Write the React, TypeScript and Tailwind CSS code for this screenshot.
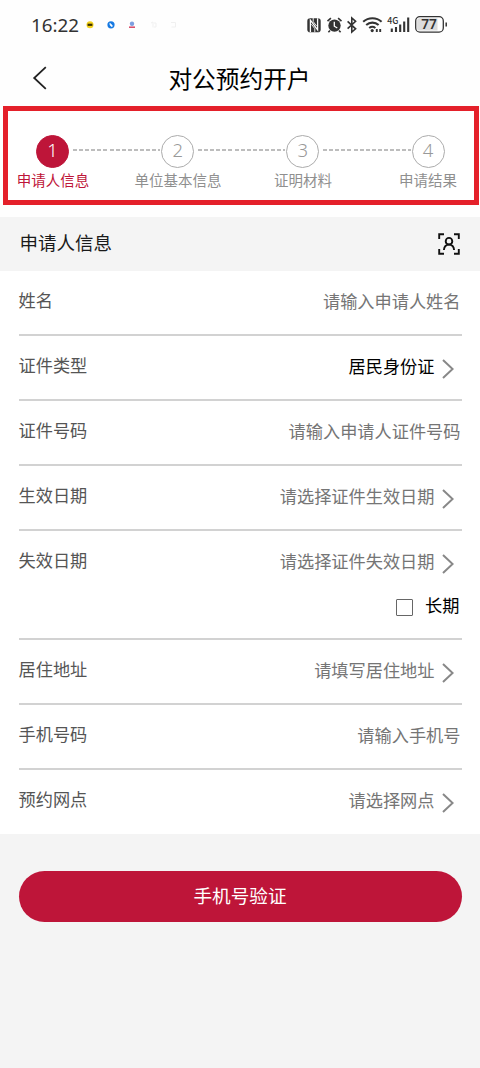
import type { ReactNode } from 'react';

type Field = {
    label: string;
    value: string;
    filled?: boolean;
    arrow?: boolean;
    extra?: ReactNode;
};

const steps = ['申请人信息', '单位基本信息', '证明材料', '申请结果'];

const fields: Field[] = [
    { label: '姓名', value: '请输入申请人姓名' },
    { label: '证件类型', value: '居民身份证', filled: true, arrow: true },
    { label: '证件号码', value: '请输入申请人证件号码' },
    { label: '生效日期', value: '请选择证件生效日期', arrow: true },
    { label: '失效日期', value: '请选择证件失效日期', arrow: true, extra: <LongTerm /> },
    { label: '居住地址', value: '请填写居住地址', arrow: true },
    { label: '手机号码', value: '请输入手机号' },
    { label: '预约网点', value: '请选择网点', arrow: true },
];

function LongTerm() {
    return (
        <label className="flex items-center justify-end h-[20px] pr-[2px] text-[17.2px] leading-[20px] text-black">
            <input
                type="checkbox"
                className="appearance-none w-[17px] h-[17px] mr-[12.5px] mt-[4px] border border-[#666] rounded-[1px] bg-white"
            />
            长期
        </label>
    );
}

function StatusIcons() {
    return (
        <svg className="overflow-visible" width="142" height="24" viewBox="306 13 142 24" fill="none" stroke="#333">
            {/* nfc */}
            <rect x="307.3" y="18.2" width="13.4" height="14" rx="2.8" fill="#333" stroke="none" />
            <path d="M310.4 32V20.2l7.2 9.6V18.2" stroke="#fff" strokeWidth="1.3" />
            <path d="M313.2 18v3.6l3.4 4.4M314.8 32.2v-3.6l-3.4-4.4" stroke="#fff" strokeWidth=".9" />
            {/* alarm */}
            <circle cx="334.5" cy="25.6" r="6.2" fill="#333" stroke="none" />
            <path d="M327.5 21.2l3.4-3M341.5 21.2l-3.4-3" strokeWidth="1.6" />
            <path d="M330 30.5l-1.6 1.8M339 30.5l1.6 1.8" strokeWidth="1.6" />
            <path d="M334.3 21.8v4.4l3 1.8" stroke="#fff" strokeWidth="1.3" />
            {/* bluetooth */}
            <path d="M347.6 21.4l8 7.4-3.8 3.2V18l3.8 3.3-8 7.4" strokeWidth="1.6" />
            {/* wifi */}
            <path d="M363.2 21.8a13.6 13.6 0 0 1 18.4 0M366.2 25a9.2 9.2 0 0 1 12.4 0M369.2 28a5 5 0 0 1 6.2 0" strokeWidth="2.1" />
            <circle cx="372.2" cy="30.6" r="1.6" fill="#333" stroke="none" />
            <path d="M376.8 29v3M380.2 29v3" strokeWidth="1.9" />
            {/* signal */}
            <text x="387.3" y="24.4" fontSize="8.8" fontWeight="500" fill="#333" stroke="none">4G</text>
            <path d="M391.8 32v-3.4M396 32v-5M400.2 32v-7.4M404.2 32v-10.4M408.2 32v-14.5" strokeWidth="2.1" />
            {/* battery */}
            <rect x="415.7" y="16.7" width="27.6" height="15.4" rx="4.2" fill="#fff" strokeWidth="1.3" />
            <path d="M419.7 18.2h17.8v12.4h-17.8a2.6 2.6 0 0 1-2.6-2.6v-7.2a2.6 2.6 0 0 1 2.6-2.6z" fill="#dcdcdc" stroke="none" />
            <text className="font-['Noto_Sans',sans-serif]" x="429" y="29.4" fontSize="13.6" fontWeight="600" textAnchor="middle" fill="#333" stroke="none">77</text>
            <path d="M446.2 22.4v4" strokeWidth="1.5" />
        </svg>
    );
}

function NoticeIcons() {
    return (
        <svg width="92" height="10" viewBox="84 20 92 10" fill="none">
            <circle cx="90" cy="24.8" r="3.5" fill="#f5d21c" />
            <path d="M87.6 24.8h4.8" stroke="#3a3000" strokeWidth="2.2" />
            <circle cx="111" cy="24.8" r="3.6" fill="#1679e2" />
            <path d="M109.8 23.2l2.4 2v1.4c-1.4 0-2.4-1.4-2.4-3.4z" fill="#fff" stroke="#fff" strokeWidth=".6" />
            <circle cx="132" cy="23.8" r="2.2" fill="#7d9fe0" />
            <path d="M129 27.2h6" stroke="#d8506c" strokeWidth="1.6" />
            <path d="M151 23l2-1v5.5M154 23h2v4h-2" stroke="#f0f0f0" />
            <path d="M171 22.5h4.5v4.5h-4" stroke="#f0f0f0" />
        </svg>
    );
}

function Stepper() {
    return (
        <div className="h-[99px] ml-[3px] mr-px pt-[23.5px] border-[5px] border-[#e4202a] bg-white">
            <div className="flex items-center pl-[28px] pr-[29.5px]">
                {steps.map((step, i) => (
                    <div key={step} className={i === 0 ? 'flex items-center' : 'flex flex-1 items-center'}>
                        {i > 0 && (
                            <div className="flex-1 h-[1.5px] ml-[4px] mr-[1px] -mt-[2px] bg-[repeating-linear-gradient(90deg,#bdbdbd_0_4px,transparent_4px_6.1px)]" />
                        )}
                        <div
                            className={
                                i === 0
                                    ? "w-[33px] h-[33px] rounded-full bg-[#be1539] text-white text-[18.5px] leading-[28px] text-center border border-[#be1539] font-['Noto_Sans',sans-serif] font-light"
                                    : "w-[33px] h-[33px] rounded-full text-[#999] text-[18.5px] leading-[28px] text-center border-[1.5px] border-[#acacac] font-['Noto_Sans',sans-serif] font-light"
                            }
                        >
                            {i + 1}
                        </div>
                    </div>
                ))}
            </div>
            <div className="flex justify-between pl-[1.5px] pr-[2.5px] mt-[1.5px] text-[14.5px] leading-[22px]">
                {steps.map((step, i) => (
                    <div
                        key={step}
                        className={
                            i === 0
                                ? 'w-[87px] text-center whitespace-nowrap text-[#be1539]'
                                : 'w-[87px] text-center whitespace-nowrap text-[#8f8f8f]'
                        }
                    >
                        {step}
                    </div>
                ))}
            </div>
        </div>
    );
}

function FieldRow({ field, last }: { field: Field; last: boolean }) {
    return (
        <div className={last ? 'h-[64px]' : field.extra ? 'h-[108.7px]' : 'h-[65.15px]'}>
            <div className="flex flex-col justify-between h-full">
                <div>
                    <div className="flex h-[64px] pt-[17px] text-[17.2px] leading-[24px]">
                        <span className="text-[#555]">{field.label}</span>
                        <span className={field.filled ? 'ml-auto mt-px text-black' : 'ml-auto mt-px text-[#757575]'}>
                            {field.value}
                        </span>
                        {field.arrow ? (
                            <svg className="ml-[7px] mr-[8px] mt-[6px]" width="12" height="20" viewBox="0 0 12 20" fill="none">
                                <path d="M1 1l9.6 9L1 19" stroke="#888" strokeWidth="2" />
                            </svg>
                        ) : (
                            <span className="w-[1px]" />
                        )}
                    </div>
                    {field.extra}
                </div>
                {!last && <div className="shrink-0 h-[2px] -mt-[2px] bg-[#d2d2d2]" />}
            </div>
        </div>
    );
}

export default function App() {
    return (
        <div className="w-[480px] h-[1068px] overflow-hidden bg-[#f4f4f4] font-['Noto_Sans_CJK_SC',sans-serif]">
            <div className="h-[217px] bg-[#fefefe]">
                <div className="flex items-center h-[50px] pl-[31px] pr-[32px]">
                    <span className="w-[53px] font-['Noto_Sans',sans-serif] text-[18.8px] leading-[50px] text-[#333]">16:22</span>
                    <NoticeIcons />
                    <div className="ml-auto">
                        <StatusIcons />
                    </div>
                </div>
                <div className="flex items-center h-[56px] px-[32px]">
                    <svg width="16" height="24" viewBox="0 0 16 24" fill="none">
                        <path d="M13.8 1.2L2.2 12l11.6 10.8" stroke="#222" strokeWidth="1.8" />
                    </svg>
                    <h1 className="flex-1 pr-[17px] text-center text-[23.7px] leading-[56px] text-black">对公预约开户</h1>
                </div>
                <Stepper />
            </div>

            <div className="flex items-center justify-between h-[53.5px] pl-[19.5px] pr-[20px]">
                <h2 className="pb-[4px] text-[18.5px] leading-[48px] text-[#1a1a1a]">申请人信息</h2>
                <svg width="22" height="22" viewBox="0 0 22 22" fill="none" stroke="#111" strokeWidth="1.9">
                    <path d="M1.2 6V1.2H6M16 1.2h4.8V6M20.8 16v4.8H16M6 20.8H1.2V16" />
                    <circle cx="11" cy="8.2" r="3.3" />
                    <path d="M5.9 17c.3-3.4 2.2-5.4 5.1-5.4s4.8 2 5.1 5.4" />
                </svg>
            </div>

            <div className="px-[18.5px] bg-white">
                {fields.map((field, i) => (
                    <FieldRow key={field.label} field={field} last={i === fields.length - 1} />
                ))}
            </div>

            <div className="px-[18.5px] pt-[37px]">
                <button className="block w-full h-[51px] pb-[3px] rounded-full bg-[#be1539] text-[18.6px] text-white">
                    手机号验证
                </button>
            </div>
        </div>
    );
}
